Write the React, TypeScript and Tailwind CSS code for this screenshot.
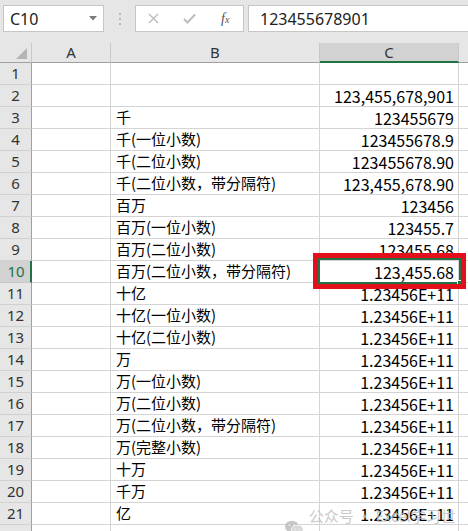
import React from "react";

const CJK = { fontFamily: '"Noto Sans CJK SC", "Noto Sans", sans-serif' };
const UI = { fontFamily: '"Noto Sans", "Noto Sans CJK SC", sans-serif' };

const E = "1.23456E+11";

// Column B labels and column C values for rows 1..22
const rows: [string, string][] = [
  ["", ""],
  ["", "123,455,678,901"],
  ["千", "123455679"],
  ["千(一位小数)", "123455678.9"],
  ["千(二位小数)", "123455678.90"],
  ["千(二位小数，带分隔符)", "123,455,678.90"],
  ["百万", "123456"],
  ["百万(一位小数)", "123455.7"],
  ["百万(二位小数)", "123455.68"],
  ["百万(二位小数，带分隔符)", "123,455.68"],
  ["十亿", E],
  ["十亿(一位小数)", E],
  ["十亿(二位小数)", E],
  ["万", E],
  ["万(一位小数)", E],
  ["万(二位小数)", E],
  ["万(二位小数，带分隔符)", E],
  ["万(完整小数)", E],
  ["十万", E],
  ["千万", E],
  ["亿", E],
  ["", ""],
];

function WeChatIcon() {
  return (
    <svg width="19" height="16" viewBox="0 0 19 16">
      <ellipse cx="7" cy="6.5" rx="7" ry="6" fill="#b9b9b9" />
      <path d="M2.5 11 L2 14 L5.5 12 Z" fill="#b9b9b9" />
      <ellipse cx="12.5" cy="10" rx="6" ry="5" fill="#cfcfcf" stroke="#f4f4f4" strokeWidth="1" />
      <path d="M16 13.5 L17 16 L14 14.5 Z" fill="#cfcfcf" />
      <circle cx="4.6" cy="5" r="0.9" fill="#f4f4f4" />
      <circle cx="9" cy="5" r="0.9" fill="#f4f4f4" />
      <circle cx="10.5" cy="9.5" r="0.75" fill="#f4f4f4" />
      <circle cx="14.5" cy="9.5" r="0.75" fill="#f4f4f4" />
    </svg>
  );
}

function Toolbar() {
  return (
    <div className="flex h-[43px] items-start bg-[#e6e6e6] pt-[5px] pl-[3px]">
      {/* name box */}
      <div className="flex h-[27px] w-[101px] items-center justify-between border border-[#c6c6c6] bg-white pl-[6px] pr-[6px]">
        <span className="text-[16px] text-[#222]" style={UI}>
          C10
        </span>
        <svg width="8" height="5" viewBox="0 0 8 5">
          <path d="M0 0 H8 L4 4.5 Z" fill="#7a7a7a" />
        </svg>
      </div>
      {/* grip dots */}
      <div className="flex w-[31px] flex-col items-center gap-[3px] pt-[8px]">
        <span className="h-[2px] w-[2px] bg-[#b8b8b8]" />
        <span className="h-[2px] w-[2px] bg-[#b8b8b8]" />
        <span className="h-[2px] w-[2px] bg-[#b8b8b8]" />
      </div>
      {/* cancel / enter / function */}
      <div className="flex h-[27px] w-[109px] items-center border border-[#c6c6c6] bg-white">
        <div className="flex w-[36px] justify-center">
          <svg width="11" height="11" viewBox="0 0 11 11">
            <path d="M1 1 L10 10 M10 1 L1 10" stroke="#bdbdbd" strokeWidth="1.4" />
          </svg>
        </div>
        <div className="flex w-[36px] justify-center">
          <svg width="13" height="11" viewBox="0 0 13 11">
            <path d="M1 6 L4.5 9.5 L12 1.5" stroke="#bdbdbd" strokeWidth="2" fill="none" />
          </svg>
        </div>
        <div className="flex w-[36px] justify-center">
          <span
            className="text-[14px] italic text-[#555]"
            style={{ fontFamily: '"Liberation Serif", serif' }}
          >
            f<span className="text-[10px]">x</span>
          </span>
        </div>
      </div>
      {/* formula input */}
      <div className="ml-[4px] flex h-[27px] flex-1 items-center border-y border-l border-[#c6c6c6] bg-white pl-[11px]">
        <span className="text-[16px] text-[#222]" style={UI}>
          123455678901
        </span>
      </div>
    </div>
  );
}

function HeaderRow() {
  const cell = "flex h-[20px] items-center justify-center border-b border-[#9f9f9f] text-[15px] text-[#333]";
  return (
    <div className="grid grid-cols-[32px_79px_209px_139px_1fr] bg-[#e6e6e6]" style={UI}>
      <div className={`${cell} relative border-r border-r-[#c8c8c8]`}>
        <svg className="absolute right-[4px] bottom-[3px]" width="11" height="11" viewBox="0 0 11 11">
          <path d="M11 0 V11 H0 Z" fill="#b5b5b5" />
        </svg>
      </div>
      <div className={`${cell} border-r border-r-[#c8c8c8]`}>A</div>
      <div className={`${cell} border-r border-r-[#c8c8c8]`}>B</div>
      <div className="flex h-[20px] items-center justify-center border-r border-b-2 border-r-[#c8c8c8] border-b-[#217346] bg-[#d2d2d2] text-[15px] text-[#333]">
        C
      </div>
      <div className={cell} />
    </div>
  );
}

export default function App() {
  return (
    <div className="relative h-[531px] w-[468px] overflow-hidden bg-white">
      <Toolbar />
      <HeaderRow />
      <div className="grid grid-cols-[32px_79px_209px_139px_1fr]">
        {rows.map(([label, value], i) => {
          const n = i + 1;
          const active = n === 10;
          return (
            <React.Fragment key={n}>
              <div
                className={
                  active
                    ? "flex h-[22px] items-center justify-center border-r-2 border-b border-r-[#217346] border-b-[#c8c8c8] bg-[#d2d2d2] pl-[2px] text-[15px] text-[#217346]"
                    : "flex h-[22px] items-center justify-center border-r border-b border-r-[#9f9f9f] border-b-[#d0d0d0] bg-[#e6e6e6] text-[15px] text-[#333]"
                }
                style={UI}
              >
                {n}
              </div>
              <div className="h-[22px] border-r border-b border-[#d4d4d4]" />
              <div
                className="flex h-[22px] items-center border-r border-b border-[#d4d4d4] pl-[5px] text-[15px] text-black"
                style={CJK}
              >
                {label}
              </div>
              <div
                className="flex h-[22px] items-center justify-end border-r border-b border-[#d4d4d4] pr-[4px] text-[16px] text-black"
                style={CJK}
              >
                {value}
              </div>
              <div className="h-[22px] border-b border-[#d4d4d4]" />
            </React.Fragment>
          );
        })}
      </div>

      {/* active cell frame with fill handle */}
      <div className="pointer-events-none absolute left-[318px] top-[258px] h-[26px] w-[143px] border-2 border-[#217346]">
        <div className="absolute -right-[4px] -bottom-[4px] h-[6px] w-[6px] border border-white bg-[#217346]" />
      </div>
      {/* red highlight box */}
      <div className="pointer-events-none absolute left-[313px] top-[253px] h-[36px] w-[153px] border-[5px] border-[#e3101b]" />

      {/* watermark */}
      <div className="pointer-events-none absolute left-[285px] top-[505px] flex items-center gap-[5px] opacity-80">
        <WeChatIcon />
        <span className="text-[15px] text-[#bdbdbd]" style={CJK}>
          公众号 · Excel学习世界
        </span>
      </div>
    </div>
  );
}
